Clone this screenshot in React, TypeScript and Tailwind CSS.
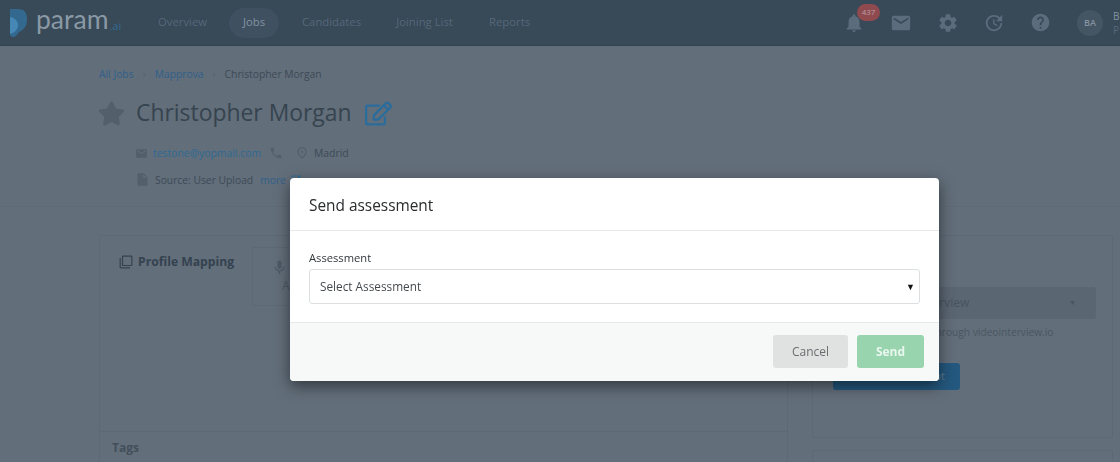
import React from 'react';
import { FaRegEdit, FaStar } from 'react-icons/fa';
import {
    MdEmail,
    MdFilterNone,
    MdHelp,
    MdInsertDriveFile,
    MdMic,
    MdNotifications,
    MdOpenInNew,
    MdOutlinePlace,
    MdPhone,
    MdSettings,
    MdUpdate,
} from 'react-icons/md';

const font = { fontFamily: '"Open Sans", "Noto Sans", sans-serif' };

const NavBar = () => (
    <div className="h-[46px] bg-[#384958] border-b border-[#334352] flex items-center overflow-hidden">
        <div className="w-[148px] pl-[9px] flex items-center shrink-0">
            <svg width="19" height="29" viewBox="0 0 19 29" className="mt-[2px]">
                <path d="M1 0h8c6 0 9 3 9 10 0 7-3 11-8 13l-3 4c-3 2-6 1-6-2z" fill="#34698f" />
                <path d="M1 8c5 1 8 4 8 8s-3 8-8 9z" fill="#4587b5" />
            </svg>
            <span className="ml-[8px] text-[26.5px] leading-none text-[#8a99a5] -mt-[6px]" style={{ fontFamily: 'Lato, sans-serif' }}>param</span>
            <span className="ml-[1px] text-[11px] leading-none text-[#356a90] mt-[6px]">.ai</span>
        </div>
        <div className="flex items-center ml-[10px] text-[11.3px] text-[#566879]">
            <span className="w-[49px] text-center whitespace-nowrap">Overview</span>
            <span className="w-[50px] h-[30px] ml-[22px] rounded-full bg-[#3f5061] flex items-center justify-center text-[#8493a0]">Jobs</span>
            <span className="w-[57px] ml-[23px] text-center">Candidates</span>
            <span className="w-[57px] ml-[37px] text-center whitespace-nowrap">Joining List</span>
            <span className="w-[40px] ml-[36px] text-center">Reports</span>
        </div>
        <div className="ml-auto flex items-center text-[#5b6d7d] shrink-0">
            <div className="relative mr-[25px]">
                <MdNotifications size={22} />
                <span className="absolute -top-[8px] left-[14px] w-[23px] h-[17px] rounded-full bg-[#8f4a50] text-[#b9a0a3] text-[8px] flex items-center justify-center">437</span>
            </div>
            <MdEmail size={22} className="mr-[25px]" />
            <MdSettings size={22} className="mr-[24px]" />
            <MdUpdate size={22} className="mr-[25px]" />
            <MdHelp size={21} className="mr-[26px]" />
            <div className="w-[26px] h-[26px] rounded-full bg-[#445564] flex items-center justify-center text-[9px] font-semibold text-[#8493a0]">BA</div>
            <div className="ml-[10px] w-[7px] overflow-hidden text-[10px] leading-[14px] text-[#8493a0]">
                <div>B</div>
                <div className="text-[#56687a]">P</div>
            </div>
        </div>
    </div>
);

const PageHeader = () => (
    <div className="h-[161px] border-b border-[#5f6b77] pl-[99px]">
        <div className="pt-[21px] flex items-center text-[10.3px] leading-[14px]">
            <span className="text-[#31608a]">All Jobs</span>
            <span className="mx-[9px] text-[#56636f]">›</span>
            <span className="text-[#31608a]">Mapprova</span>
            <span className="mx-[9px] text-[#56636f]">›</span>
            <span className="text-[#3d4a57]">Christopher Morgan</span>
        </div>
        <div className="mt-[17px] flex items-center h-[30px]">
            <FaStar size={27} color="#535f6b" className="-ml-[1px]" />
            <span className="ml-[11px] text-[22.9px] leading-none font-medium text-[#36444f]">Christopher Morgan</span>
            <FaRegEdit size={27} className="ml-[13px] text-[#2a6c9c]" />
        </div>
        <div className="mt-[18px] pl-[36px] flex items-center text-[10.4px] leading-[14px]">
            <MdEmail size={13} color="#53606c" />
            <span className="ml-[5px] text-[#2f6a94]">testone@yopmail.com</span>
            <MdPhone size={14} color="#53606c" className="ml-[8px]" />
            <MdOutlinePlace size={14} color="#53606c" className="ml-[12px]" />
            <span className="ml-[5px] text-[#3d4a57]">Madrid</span>
        </div>
        <div className="mt-[12px] pl-[36px] flex items-center text-[10.3px] leading-[14px]">
            <MdInsertDriveFile size={15} color="#53606c" />
            <span className="ml-[5px] text-[#3d4a57]">Source: User Upload</span>
            <span className="ml-[7px] text-[#31608a]">more</span>
            <MdOpenInNew size={12} className="ml-[4px] text-[#2f6a94]" />
        </div>
    </div>
);

const ProfileCard = () => (
    <div className="w-[689px] h-[240px] border border-[#5d6974] flex flex-col">
        <div className="h-[195px] flex items-start">
            <div className="w-[151px] pt-[17px] pl-[19px] flex items-center gap-[5px] text-[12.2px] font-bold text-[#34424f]">
                <MdFilterNone size={14} />
                <span>Profile Mapping</span>
            </div>
            <div className="mt-[11px] ml-[1px] w-[120px] h-[59px] border border-[#5d6974] pl-[18px] pt-[11px] text-[#4e5b67] text-[12px]">
                <MdMic size={17} color="#4e5b67" />
                <div className="ml-[11px] mt-[1px]">A</div>
            </div>
        </div>
        <div className="flex-1 border-t border-[#5d6974] pl-[12px] pt-[8px] text-[12px] leading-[16px] font-bold text-[#434f5b]">Tags</div>
    </div>
);

const SideColumn = () => (
    <div className="ml-[24px] w-[301px] flex flex-col gap-[12px]">
        <div className="h-[203px] border border-[#5d6974] pl-[20px] pt-[51px]">
            <div className="w-[263px] h-[32px] rounded-[3px] bg-[#5a6672] flex items-center justify-between pl-[50px] pr-[20px] text-[12px] text-[#48545f]">
                <span>Video Interview</span>
                <span className="text-[7px]">▼</span>
            </div>
            <div className="mt-[6px] ml-[14px] text-[10.2px] leading-[14px] text-[#4a5662] whitespace-nowrap">Send assessment through videointerview.io</div>
            <div className="mt-[24px] w-[127px] h-[27px] rounded-[3px] bg-[#24587e] flex items-center justify-end pr-[15px] text-[11px] text-[#5e7b92]">Send Assessment</div>
        </div>
        <div className="h-[40px] border border-[#5d6974]" />
    </div>
);

const AssessmentModal = () => (
    <div className="fixed inset-0 flex items-start pt-[178px] pl-[290px]">
        <div className="w-[649px] h-[203px] bg-white rounded-[4px] flex flex-col shadow-[0_5px_15px_rgba(0,0,0,0.5)] overflow-hidden">
            <div className="h-[53px] border-b border-[#e6e8ea] pl-[19px] pt-[4px] flex items-center text-[15.4px] font-medium text-[#292b2c]">
                <span>Send assessment</span>
            </div>
            <div className="h-[92px] border-b border-[#e6e8ea] px-[19px] pt-[19px]">
                <div className="text-[11.2px] leading-[16px] text-[#33383c]">Assessment</div>
                <div className="mt-[3px] h-[35px] border border-[#dcdfe2] rounded-[3px] pl-[10px] pr-[4px] flex items-center justify-between text-[11.8px] text-[#464a4e]">
                    <span>Select Assessment</span>
                    <span className="text-[9px] text-[#111]">▼</span>
                </div>
            </div>
            <div className="flex-1 bg-[#f7f9f9] flex items-center justify-end pr-[15px] gap-[9px] pb-[1px]">
                <button className="w-[75px] h-[33px] rounded-[3px] bg-[#e0e2e2] text-[12px] text-[#6a6d6f]">Cancel</button>
                <button className="w-[67px] h-[33px] rounded-[3px] bg-[#98d4ae] text-[12px] font-bold text-[#e9f6ee]">Send</button>
            </div>
        </div>
    </div>
);

export default function App() {
    return (
        <div className="w-[1120px] h-[462px] overflow-hidden bg-[#626e7a] relative" style={font}>
            <NavBar />
            <PageHeader />
            <div className="pt-[28px] pl-[99px] flex items-start">
                <ProfileCard />
                <SideColumn />
            </div>
            <AssessmentModal />
        </div>
    );
}
